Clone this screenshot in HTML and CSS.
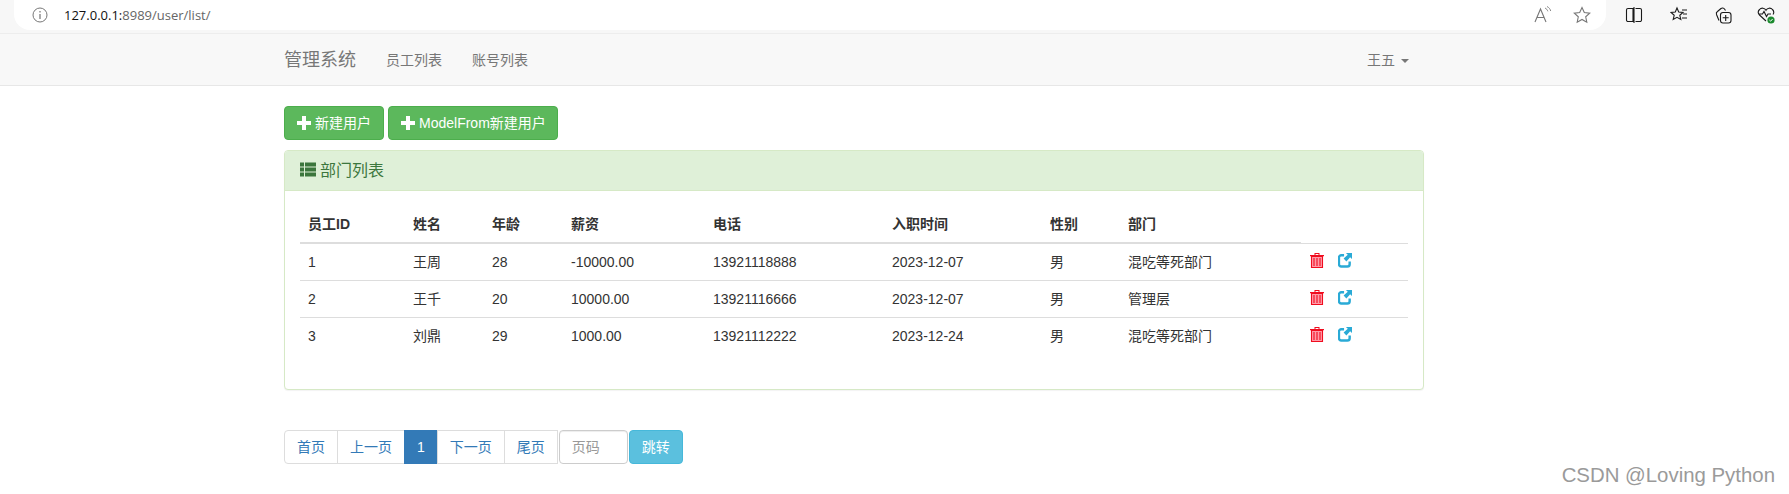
FILE: index.html
```html
<!DOCTYPE html>
<html lang="zh">
<head>
<meta charset="utf-8">
<title>用户列表</title>
<link rel="stylesheet" href="styles.css">
</head>
<body>
<svg class="defs" width="0" height="0" aria-hidden="true">
  <symbol id="i-plus" viewBox="0 0 14 14"><path d="M5 0h4v5h5v4H9v5H5V9H0V5h5z" fill="currentColor"/></symbol>
  <symbol id="i-list" viewBox="0 0 16 15"><path d="M0 .500h4v4H0zM5 .500h11v4H5zM0 5.500h4v4H0zM5 5.500h11v4H5zM0 10.500h4v4H0zM5 10.500h11v4H5z" fill="currentColor"/></symbol>
  <symbol id="i-trash" viewBox="0 0 14 16">
    <path d="M2 5h10v10H2z" fill="#ff9aa8"/>
    <path d="M1.500 4.500h11v11h-11zM4 6v8M7 6v8M10 6v8" fill="none" stroke="#f00d1f" stroke-width="1.100"/>
    <path d="M0 3h14v1.300H0zM4.500 1h5v2h-1V2h-3v1h-1z" fill="#f00d1f"/>
  </symbol>
  <symbol id="i-share" viewBox="0 0 15 15">
    <path d="M6.500 2.500H3.500A2.500 2.500 0 0 0 1 5v7a2.500 2.500 0 0 0 2.500 2.500H10a2.500 2.500 0 0 0 2.500-2.500V9" fill="none" stroke="#2aaad6" stroke-width="2.600"/>
    <path d="M8.500 0H15v6.500l-2-2-4 4.500-3-3 4.500-4z" fill="#2aaad6"/>
  </symbol>
</svg>

<header class="chrome">
  <div class="address">
    <svg class="info" width="16" height="16" viewBox="0 0 16 16"><circle cx="8" cy="8" r="7" fill="none" stroke="#777" stroke-width="1"/><path d="M8 4v1.400M8 7v5" stroke="#666" stroke-width="1.100"/></svg>
    <span class="url"><b>127.0.0.1:</b>8989/user/list/</span>
    <span class="addr-tools">
      <svg width="20" height="20" viewBox="0 0 20 20"><path d="M2 17 7.500 4 13 17M4 12.500h7" fill="none" stroke="#777" stroke-width="1.100"/><path d="M12 3c1.500.8 2.400 1.800 2.800 3.300M14 1.500c2 1 3.200 2.500 3.700 4.500" fill="none" stroke="#888" stroke-width="1"/></svg>
      <svg width="20" height="20" viewBox="0 0 20 20"><path d="m10 2.500 2.300 5 5.400.6-4 3.700 1.100 5.400-4.800-2.700-4.800 2.700 1.100-5.400-4-3.700 5.400-.6z" fill="none" stroke="#777" stroke-width="1.100"/></svg>
    </span>
  </div>
  <div class="browser-tools">
    <svg width="18" height="18" viewBox="0 0 18 18"><path d="M8 2.500H3A1.500 1.500 0 0 0 1.500 4v10A1.500 1.500 0 0 0 3 15.500h5zM10.500 2.500H15A1.500 1.500 0 0 1 16.500 4v10a1.500 1.500 0 0 1-1.500 1.500h-4.500M9 1v16" fill="none" stroke="#1a1a1a" stroke-width="1.100"/></svg>
    <svg width="18" height="18" viewBox="0 0 18 18"><path d="m7 2 1.700 4 4.300.4-3.200 2.900 1 4.200L7 11.300l-3.800 2.200 1-4.200L1 6.400 5.300 6zM12 4h5M13 8h4M12 12h5" fill="none" stroke="#1a1a1a" stroke-width="1.100"/></svg>
    <svg width="18" height="18" viewBox="0 0 18 18"><path d="M5 14.500 2.500 8.500a2.500 2.500 0 0 1 1-3l3.500-3a2.500 2.500 0 0 1 3.500.5l1 1.500" fill="none" stroke="#1a1a1a" stroke-width="1.100"/><rect x="6.500" y="6.500" width="10.500" height="10.500" rx="2.500" fill="none" stroke="#1a1a1a" stroke-width="1.100"/><path d="M11.700 9v6M8.700 11.800h6" stroke="#1a1a1a" stroke-width="1.100"/></svg>
    <svg width="18" height="18" viewBox="0 0 18 18"><path d="M9 15 2.500 9a4 4 0 0 1 0-5.500 4 4 0 0 1 6.500.8 4 4 0 0 1 6.500-.8 4 4 0 0 1 .5 5M2 8h3.500l1.500-2.500 2.500 5 1.500-2.500H14" fill="none" stroke="#1a1a1a" stroke-width="1.100"/><circle cx="14" cy="14" r="3.600" fill="#1b8a2e"/><path d="m12.400 14 1.200 1.200 2-2.200" fill="none" stroke="#fff" stroke-width="1"/></svg>
  </div>
</header>

<nav class="navbar">
  <div class="navbar-inner">
    <a class="brand">管理系统</a>
    <a class="nav-link">员工列表</a>
    <a class="nav-link">账号列表</a>
    <a class="nav-user">王五<span class="caret"></span></a>
  </div>
</nav>

<main class="container">
  <div class="actions">
    <a class="btn btn-success"><svg class="g-icon"><use href="#i-plus"/></svg>新建用户</a>
    <a class="btn btn-success btn-wide"><svg class="g-icon"><use href="#i-plus"/></svg>ModelFrom新建用户</a>
  </div>

  <section class="panel">
    <div class="panel-heading"><svg class="list-icon"><use href="#i-list"/></svg>部门列表</div>
    <div class="panel-body">
      <table class="table">
        <colgroup>
          <col class="c1"><col class="c2"><col class="c3"><col class="c4"><col class="c5"><col class="c6"><col class="c7"><col class="c8"><col class="c9">
        </colgroup>
        <thead>
          <tr><th>员工ID</th><th>姓名</th><th>年龄</th><th>薪资</th><th>电话</th><th>入职时间</th><th>性别</th><th>部门</th></tr>
        </thead>
        <tbody>
          <tr><td>1</td><td>王周</td><td>28</td><td>-10000.00</td><td>13921118888</td><td>2023-12-07</td><td>男</td><td>混吃等死部门</td>
            <td class="ops"><svg class="op"><use href="#i-trash"/></svg><svg class="op"><use href="#i-share"/></svg></td></tr>
          <tr><td>2</td><td>王千</td><td>20</td><td>10000.00</td><td>13921116666</td><td>2023-12-07</td><td>男</td><td>管理层</td>
            <td class="ops"><svg class="op"><use href="#i-trash"/></svg><svg class="op"><use href="#i-share"/></svg></td></tr>
          <tr><td>3</td><td>刘鼎</td><td>29</td><td>1000.00</td><td>13921112222</td><td>2023-12-24</td><td>男</td><td>混吃等死部门</td>
            <td class="ops"><svg class="op"><use href="#i-trash"/></svg><svg class="op"><use href="#i-share"/></svg></td></tr>
        </tbody>
      </table>
    </div>
  </section>

  <div class="pager">
    <ul class="pagination">
      <li><a>首页</a></li>
      <li><a>上一页</a></li>
      <li class="active"><a>1</a></li>
      <li><a>下一页</a></li>
      <li><a>尾页</a></li>
    </ul>
    <input class="page-input" type="text" placeholder="页码">
    <button class="btn btn-info" type="button">跳转</button>
  </div>
</main>

<div class="watermark">CSDN @Loving Python</div>
</body>
</html>
```

FILE: styles.css
```css
* { box-sizing: border-box; }

html, body { margin: 0; padding: 0; }

body {
  position: relative;
  height: 494px;
  overflow: hidden;
  background: #fff;
  color: #333;
  font-family: "Liberation Sans", "Noto Sans CJK SC", sans-serif;
  font-size: 14px;
  line-height: 20px;
}

.defs { position: absolute; }

/* Browser chrome */
.chrome {
  display: flex;
  height: 34px;
  background: #f7f7f7;
  border-bottom: 1px solid #ededed;
}

.address {
  display: flex;
  align-items: center;
  width: 1592px;
  height: 30px;
  margin-left: 14px;
  padding: 0 12px 0 18px;
  background: #fff;
  border-radius: 0 0 16px 16px / 0 0 16px 16px;
}

.info { flex: none; }

.url {
  margin-left: 16px;
  color: #666;
  font-family: "Open Sans", sans-serif;
  font-size: 13px;
}

.url b { color: #111; font-weight: 400; }

.addr-tools {
  display: flex;
  gap: 19px;
  margin-left: auto;
  margin-right: 2px;
}

.browser-tools {
  display: flex;
  gap: 27px;
  height: 30px;
  margin-left: 19px;
  align-items: center;
}

.browser-tools svg:nth-child(3) { margin-left: -1px; }
.browser-tools svg:nth-child(4) { margin-left: -2px; }

/* Navbar */
.navbar {
  height: 52px;
  background: #f8f8f8;
  border-bottom: 1px solid #e7e7e7;
}

.navbar-inner {
  display: flex;
  align-items: center;
  width: 1140px;
  height: 51px;
  margin-left: 284px;
  color: #777;
}

.brand {
  font-size: 18px;
  margin-right: 15px;
}

.nav-link { padding: 0 15px; }

.nav-user {
  margin-left: auto;
  padding-right: 15px;
}

.caret {
  display: inline-block;
  margin-left: 6px;
  vertical-align: middle;
  border-top: 4px solid #777;
  border-left: 4px solid transparent;
  border-right: 4px solid transparent;
}

/* Content */
.container {
  width: 1140px;
  margin-left: 284px;
  padding-top: 20px;
}

.actions {
  display: flex;
  gap: 4px;
  margin-bottom: 10px;
}

.btn {
  display: inline-block;
  height: 34px;
  padding: 6px 12px;
  border: 1px solid transparent;
  border-radius: 4px;
  color: #fff;
  font: inherit;
}

.btn-wide { padding-right: 11px; }

.btn-success { background: #5cb85c; border-color: #4cae4c; }
.btn-info { background: #5bc0de; border-color: #46b8da; }

.g-icon {
  width: 14px;
  height: 14px;
  margin-right: 4px;
  vertical-align: -2px;
}

.panel {
  background: #fff;
  border: 1px solid #d6e9c6;
  border-radius: 4px;
  box-shadow: 0 1px 1px rgba(0, 0, 0, .05);
}

.panel-heading {
  height: 40px;
  padding: 10px 15px 8px;
  background: #dff0d8;
  border-bottom: 1px solid #d6e9c6;
  border-radius: 3px 3px 0 0;
  color: #3c763d;
  font-size: 16px;
  line-height: 20px;
}

.list-icon {
  width: 16px;
  height: 15px;
  margin-right: 4px;
  vertical-align: -1px;
}

.panel-body { padding: 15px; }

.table {
  width: 1108px;
  margin-bottom: 20px;
  border-collapse: collapse;
  table-layout: fixed;
}

.c1 { width: 105px; }
.c2 { width: 79px; }
.c3 { width: 79px; }
.c4 { width: 142px; }
.c5 { width: 179px; }
.c6 { width: 158px; }
.c7 { width: 78px; }
.c8 { width: 181px; }
.c9 { width: 107px; }

.table th {
  padding: 8px;
  text-align: left;
  border-bottom: 2px solid #ddd;
}

.table td {
  padding: 8px;
  border-top: 1px solid #ddd;
}

.table td.ops { padding: 7px 8px 7px 9px; }

.op {
  display: inline-block;
  width: 14px;
  height: 16px;
  margin-right: 14px;
  vertical-align: top;
}

/* Pagination */
.pager {
  display: flex;
  gap: 1px;
  margin-top: 40px;
}

.pagination {
  display: flex;
  margin: 0;
  padding: 0;
  list-style: none;
}

.pagination a {
  display: block;
  height: 34px;
  margin-left: -1px;
  padding: 6px 12px;
  background: #fff;
  border: 1px solid #ddd;
  color: #337ab7;
}

.pagination li:first-child a {
  margin-left: 0;
  border-radius: 4px 0 0 4px;
}

.pagination .active a {
  background: #337ab7;
  border-color: #337ab7;
  color: #fff;
}

.page-input {
  width: 69px;
  height: 34px;
  padding: 6px 12px;
  border: 1px solid #ccc;
  border-radius: 4px;
  box-shadow: inset 0 1px 1px rgba(0, 0, 0, .075);
  color: #555;
  font: inherit;
}

.page-input::placeholder { color: #999; opacity: 1; }

/* Overlay */
.watermark {
  position: absolute;
  right: 14px;
  top: 463px;
  color: #9a9a9a;
  font-size: 20.400px;
  line-height: 24px;
}
```
